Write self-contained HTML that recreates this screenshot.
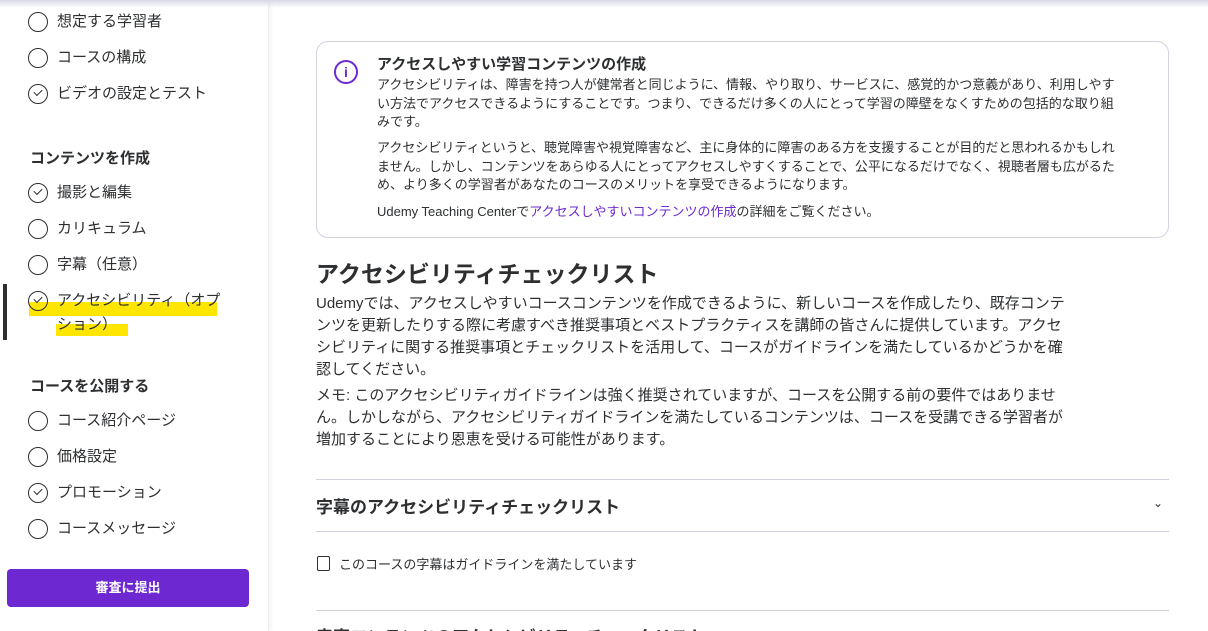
<!DOCTYPE html>
<html><head><meta charset="utf-8"><style>
*{box-sizing:border-box;margin:0;padding:0}
html,body{width:1208px;height:631px;overflow:hidden}
body{background:#fff;font-family:"Liberation Sans","Noto Sans CJK JP",sans-serif;color:#2d2f31;position:relative}
.topsh{position:absolute;left:0;top:0;width:1208px;height:8px;background:linear-gradient(#d8d8e6,rgba(255,255,255,0));z-index:5}
.side{position:absolute;left:0;top:0;width:269px;height:631px;border-right:1px solid #ececf2;box-shadow:2px 0 4px rgba(0,0,0,.05)}
.it{position:absolute;left:28px;font-size:15px;line-height:24px;display:flex;align-items:flex-start}
.ic{width:20px;height:20px;border:1.5px solid #2d2f31;border-radius:50%;margin-top:2px;margin-right:9px;flex:none;position:relative}
.ic.ck:after{content:"";position:absolute;left:5px;top:4px;width:7px;height:4px;border-left:1.5px solid #2d2f31;border-bottom:1.5px solid #2d2f31;transform:rotate(-45deg)}
.h{position:absolute;left:30px;font-size:15px;font-weight:bold}
.btn{position:absolute;left:7px;top:569px;width:242px;height:38px;background:#6d28d2;color:#fff;border-radius:4px;font-size:13px;font-weight:bold;text-align:center;line-height:38px}
.box{position:absolute;left:316px;top:41px;width:853px;height:197px;border:1px solid #d1d2e0;border-radius:12px}
.info{position:absolute;left:334px;top:60px;width:24px;height:24px;border:2px solid #6d28d2;border-radius:50%;color:#6d28d2;font-weight:bold;font-size:14px;text-align:center;line-height:20px}
.bt{position:absolute;left:377px;width:748px;font-size:13px;line-height:18.7px}
a{color:#6d28d2;text-decoration:none}
.p{position:absolute;left:316px;width:754px;font-size:15px;line-height:22px}
.hr{position:absolute;left:316px;width:853px;height:1px;background:#d1d2e0}
</style></head><body>
<div class="topsh"></div>
<div class="side">
<div class="it" style="top:10px"><span class="ic"></span>想定する学習者</div>
<div class="it" style="top:46px"><span class="ic"></span>コースの構成</div>
<div class="it" style="top:82px"><span class="ic ck"></span>ビデオの設定とテスト</div>
<div class="h" style="top:147px">コンテンツを作成</div>
<div class="it" style="top:181px"><span class="ic ck"></span>撮影と編集</div>
<div class="it" style="top:217px"><span class="ic"></span>カリキュラム</div>
<div class="it" style="top:253px"><span class="ic"></span>字幕（任意）</div>
<div style="position:absolute;left:3px;top:284px;width:4px;height:56px;background:#2d2f31"></div>
<div style="position:absolute;left:29px;top:302px;width:188px;height:14px;background:#ffe600"></div>
<div style="position:absolute;left:56px;top:324px;width:72px;height:12px;background:#ffe600"></div>
<div class="it" style="top:289px;width:205px"><span class="ic ck"></span><span>アクセシビリティ（オプション）</span></div>
<div class="h" style="top:375px">コースを公開する</div>
<div class="it" style="top:409px"><span class="ic"></span>コース紹介ページ</div>
<div class="it" style="top:445px"><span class="ic"></span>価格設定</div>
<div class="it" style="top:481px"><span class="ic ck"></span>プロモーション</div>
<div class="it" style="top:517px"><span class="ic"></span>コースメッセージ</div>
<div class="btn">審査に提出</div>
</div>
<div class="box"></div>
<div class="info">i</div>
<div class="bt" style="top:56px;font-size:15px;font-weight:bold">アクセスしやすい学習コンテンツの作成</div>
<div class="bt" style="top:76px">アクセシビリティは、障害を持つ人が健常者と同じように、情報、やり取り、サービスに、感覚的かつ意義があり、利用しやすい方法でアクセスできるようにすることです。つまり、できるだけ多くの人にとって学習の障壁をなくすための包括的な取り組みです。</div>
<div class="bt" style="top:139px">アクセシビリティというと、聴覚障害や視覚障害など、主に身体的に障害のある方を支援することが目的だと思われるかもしれません。しかし、コンテンツをあらゆる人にとってアクセスしやすくすることで、公平になるだけでなく、視聴者層も広がるため、より多くの学習者があなたのコースのメリットを享受できるようになります。</div>
<div class="bt" style="top:203px">Udemy Teaching Centerで<a>アクセスしやすいコンテンツの作成</a>の詳細をご覧ください。</div>
<div style="position:absolute;left:316px;top:255px;font-size:23px;font-weight:bold">アクセシビリティチェックリスト</div>
<div class="p" style="top:293px">Udemyでは、アクセスしやすいコースコンテンツを作成できるように、新しいコースを作成したり、既存コンテンツを更新したりする際に考慮すべき推奨事項とベストプラクティスを講師の皆さんに提供しています。アクセシビリティに関する推奨事項とチェックリストを活用して、コースがガイドラインを満たしているかどうかを確認してください。</div>
<div class="p" style="top:385px">メモ: このアクセシビリティガイドラインは強く推奨されていますが、コースを公開する前の要件ではありません。しかしながら、アクセシビリティガイドラインを満たしているコンテンツは、コースを受講できる学習者が増加することにより恩恵を受ける可能性があります。</div>
<div class="hr" style="top:479px"></div>
<div style="position:absolute;left:316px;top:493px;font-size:17px;font-weight:bold">字幕のアクセシビリティチェックリスト</div>
<div style="position:absolute;left:1153px;top:496px;font-size:12px">⌄</div>
<div class="hr" style="top:531px"></div>
<div style="position:absolute;left:317px;top:556px;width:13px;height:15px;border:1.5px solid #2d2f31;border-radius:2px"></div>
<div style="position:absolute;left:339px;top:554px;font-size:13px">このコースの字幕はガイドラインを満たしています</div>
<div class="hr" style="top:610px"></div>
<div style="position:absolute;left:316px;top:623px;font-size:17px;font-weight:bold">音声コンテンツのアクセシビリティチェックリスト</div>
</body></html>
